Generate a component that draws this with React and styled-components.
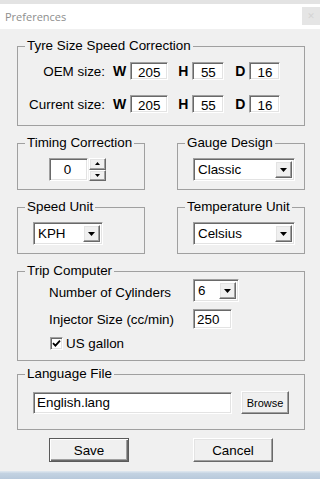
import React from 'react';
import styled, { createGlobalStyle } from 'styled-components';

const Global = createGlobalStyle`
  html, body { margin: 0; padding: 0; }
  body {
    width: 320px; height: 479px; overflow: hidden;
    font-family: "Liberation Sans", Arial, sans-serif;
    font-size: 13.4px; color: #000; background: #f0f0f0;
  }
  * { box-sizing: border-box; }
`;

const Screen = styled.div`
  width: 320px; height: 479px;
  display: flex; flex-direction: column;
`;
const TopStrip = styled.div`
  height: 4px; background: #e3e3e3;
`;
const TitleBar = styled.div`
  height: 25px; background: #fff;
  display: flex; align-items: flex-start;
  padding-left: 5px;
`;
const Title = styled.span`
  flex: 1;
  font-family: "Open Sans", "Noto Sans", sans-serif;
  font-size: 11px; line-height: 25px;
  color: #8e8e8e;
`;
const CloseBtn = styled.div`
  width: 18px; height: 18px; margin-top: 3px;
  background: #e5e5e5; color: #d4d4d4;
  display: flex; align-items: center; justify-content: center;
  font-family: "DejaVu Sans", sans-serif; font-size: 9px;
`;
const Body = styled.div`
  flex: 1;
  background: #f0f0f0;
  display: flex; flex-direction: column;
  padding: 9px 15px 0 17px;
`;
const Desktop = styled.div`
  height: 8px;
  background: linear-gradient(#dbe4ed 0, #dbe4ed 1px, #c4d3e2 2px, #b8c9db 100%);
`;

const Group = styled.fieldset`
  margin: ${p => p.$mt || 0}px 0 0 0;
  padding: 0;
  min-width: 0;
  border: 1px solid #a0a0a0;
`;
const Legend = styled.legend`
  margin-left: 7px;
  padding: 0 2px;
  font-size: 13.4px;
  line-height: 16px;
`;
const Content = styled.div`
  display: flex; flex-direction: column;
  gap: ${p => p.$gap || 0}px;
  padding: ${p => p.$pt || 0}px 0 ${p => p.$pb || 0}px ${p => p.$pl || 0}px;
`;
const Columns = styled.div`
  display: grid;
  grid-template-columns: 128px 128px;
  column-gap: 32px;
  margin-top: 9px;
`;

const sunken = `
  border: 1px solid;
  border-color: #a0a0a0 #ffffff #ffffff #a0a0a0;
  box-shadow: inset 1px 1px 0 #696969, inset -1px -1px 0 #e3e3e3;
  background: #fff;
`;
const raised = `
  border: 1px solid;
  border-color: #ffffff #696969 #696969 #ffffff;
  box-shadow: inset -1px -1px 0 #a0a0a0, inset 1px 1px 0 #e3e3e3;
  background: #f0f0f0;
`;

const TyreRow = styled.div`
  display: flex; align-items: center;
  height: 18px;
`;
const SizeLabel = styled.span`
  width: 87px; text-align: right;
  white-space: nowrap;
`;
const Letter = styled.span`
  font-weight: bold; font-size: 14px;
  margin-left: ${p => p.$ml}px;
  margin-right: 4px;
`;
const TyreInput = styled.div`
  ${sunken}
  width: ${p => p.$w}px; height: 18px;
  text-align: center;
  line-height: 18px;
  padding-top: 1px;
`;

const Spin = styled.div`
  display: flex;
`;
const SpinInput = styled.div`
  ${sunken}
  width: 39px; height: 23px;
  display: flex; align-items: center; justify-content: center;
  padding-right: 2px;
`;
const SpinButtons = styled.div`
  display: flex; flex-direction: column;
  width: 17px; height: 23px;
  margin-left: 1px;
`;
const SpinBtn = styled.div`
  ${raised}
  flex: 1;
  display: flex; align-items: center; justify-content: center;
`;

const Combo = styled.div`
  ${sunken}
  width: ${p => p.$w}px; height: 23px;
  display: flex; align-items: stretch;
  padding: 2px;
`;
const ComboValue = styled.span`
  flex: 1;
  padding-left: 2px;
  display: flex; align-items: center;
`;
const ArrowBtn = styled.div`
  ${raised}
  width: 17px;
  display: flex; align-items: center; justify-content: center;
`;

const FieldRow = styled.div`
  display: flex; align-items: center;
  margin-top: ${p => p.$mt || 0}px;
`;
const FieldLabel = styled.span`
  width: 144px;
  padding-top: ${p => p.$pt || 0}px;
`;
const TextInput = styled.div`
  ${sunken}
  width: ${p => p.$w}px; height: ${p => p.$h}px;
  display: flex; align-items: center;
  padding-left: 3px;
`;
const CheckRow = styled.label`
  display: flex; align-items: center;
  height: 13px;
  padding-left: 1px;
  margin-top: ${p => p.$mt || 0}px;
`;
const CheckBox = styled.span`
  ${sunken}
  width: 13px; height: 13px;
  display: flex; align-items: center; justify-content: center;
  margin-right: 3px;
`;

const Button = styled.div`
  ${raised}
  width: ${p => p.$w}px; height: ${p => p.$h}px;
  margin-left: ${p => p.$ml || 0}px;
  display: flex; align-items: center; justify-content: center;
  font-size: ${p => p.$fs || 13.4}px;
  ${p => p.$default ? 'border-color: #5a5a5a; box-shadow: inset 1px 1px 0 #fff, inset -1px -1px 0 #696969, inset -2px -2px 0 #a0a0a0;' : ''}
`;
const ButtonRow = styled.div`
  display: flex;
  gap: 64px;
  padding-left: 32px;
  margin-top: 8px;
`;

const Down = ({ w = 7, h = 4 }) => (
  <svg width={w} height={h} viewBox={`0 0 ${w} ${h}`}>
    <polygon points={`0,0 ${w},0 ${w / 2},${h}`} fill="#000" />
  </svg>
);
const Up = ({ w = 5, h = 3 }) => (
  <svg width={w} height={h} viewBox={`0 0 ${w} ${h}`}>
    <polygon points={`0,${h} ${w},${h} ${w / 2},0`} fill="#000" />
  </svg>
);

const Dropdown = ({ w, value }) => (
  <Combo $w={w}>
    <ComboValue>{value}</ComboValue>
    <ArrowBtn><Down /></ArrowBtn>
  </Combo>
);

const Tyre = ({ label, w, h, d }) => (
  <TyreRow>
    <SizeLabel>{label}</SizeLabel>
    <Letter $ml={8}>W</Letter>
    <TyreInput $w={38}>{w}</TyreInput>
    <Letter $ml={10}>H</Letter>
    <TyreInput $w={32}>{h}</TyreInput>
    <Letter $ml={11}>D</Letter>
    <TyreInput $w={31}>{d}</TyreInput>
  </TyreRow>
);

export default function App() {
  return (
    <Screen>
      <Global />
      <TopStrip />
      <TitleBar>
        <Title>Preferences</Title>
        <CloseBtn>✕</CloseBtn>
      </TitleBar>
      <Body>
        <Group>
          <Legend>Tyre Size Speed Correction</Legend>
          <Content $pt={8} $pb={12} $gap={15}>
            <Tyre label="OEM size:" w="205" h="55" d="16" />
            <Tyre label="Current size:" w="205" h="55" d="16" />
          </Content>
        </Group>

        <Columns>
          <Group>
            <Legend>Timing Correction</Legend>
            <Content $pt={7} $pb={8} $pl={31}>
              <Spin>
                <SpinInput>0</SpinInput>
                <SpinButtons>
                  <SpinBtn><Up /></SpinBtn>
                  <SpinBtn><Down w={5} h={3} /></SpinBtn>
                </SpinButtons>
              </Spin>
            </Content>
          </Group>
          <Group>
            <Legend>Gauge Design</Legend>
            <Content $pt={7} $pb={8} $pl={15}>
              <Dropdown w={102} value="Classic" />
            </Content>
          </Group>
        </Columns>

        <Columns>
          <Group>
            <Legend>Speed Unit</Legend>
            <Content $pt={7} $pb={8} $pl={15}>
              <Dropdown w={70} value="KPH" />
            </Content>
          </Group>
          <Group>
            <Legend>Temperature Unit</Legend>
            <Content $pt={7} $pb={8} $pl={15}>
              <Dropdown w={102} value="Celsius" />
            </Content>
          </Group>
        </Columns>

        <Group $mt={9}>
          <Legend>Trip Computer</Legend>
          <Content $pt={0} $pb={10} $pl={31}>
            <FieldRow>
              <FieldLabel $pt={3}>Number of Cylinders</FieldLabel>
              <Dropdown w={46} value="6" />
            </FieldRow>
            <FieldRow $mt={7}>
              <FieldLabel>Injector Size (cc/min)</FieldLabel>
              <TextInput $w={39} $h={20}>250</TextInput>
            </FieldRow>
            <CheckRow $mt={8}>
              <CheckBox>
                <svg width="9" height="9" viewBox="0 0 9 9">
                  <path d="M1 4.2 L3.4 6.6 L8 1.6" stroke="#000" strokeWidth="1.8" fill="none" />
                </svg>
              </CheckBox>
              US gallon
            </CheckRow>
          </Content>
        </Group>

        <Group $mt={5}>
          <Legend>Language File</Legend>
          <Content $pt={9} $pb={15} $pl={15}>
            <FieldRow>
              <TextInput $w={199} $h={22}>English.lang</TextInput>
              <Button $w={48} $h={23} $fs={11} $ml={9}>Browse</Button>
            </FieldRow>
          </Content>
        </Group>

        <ButtonRow>
          <Button $w={80} $h={24} $default>Save</Button>
          <Button $w={80} $h={24}>Cancel</Button>
        </ButtonRow>
      </Body>
      <Desktop />
    </Screen>
  );
}
